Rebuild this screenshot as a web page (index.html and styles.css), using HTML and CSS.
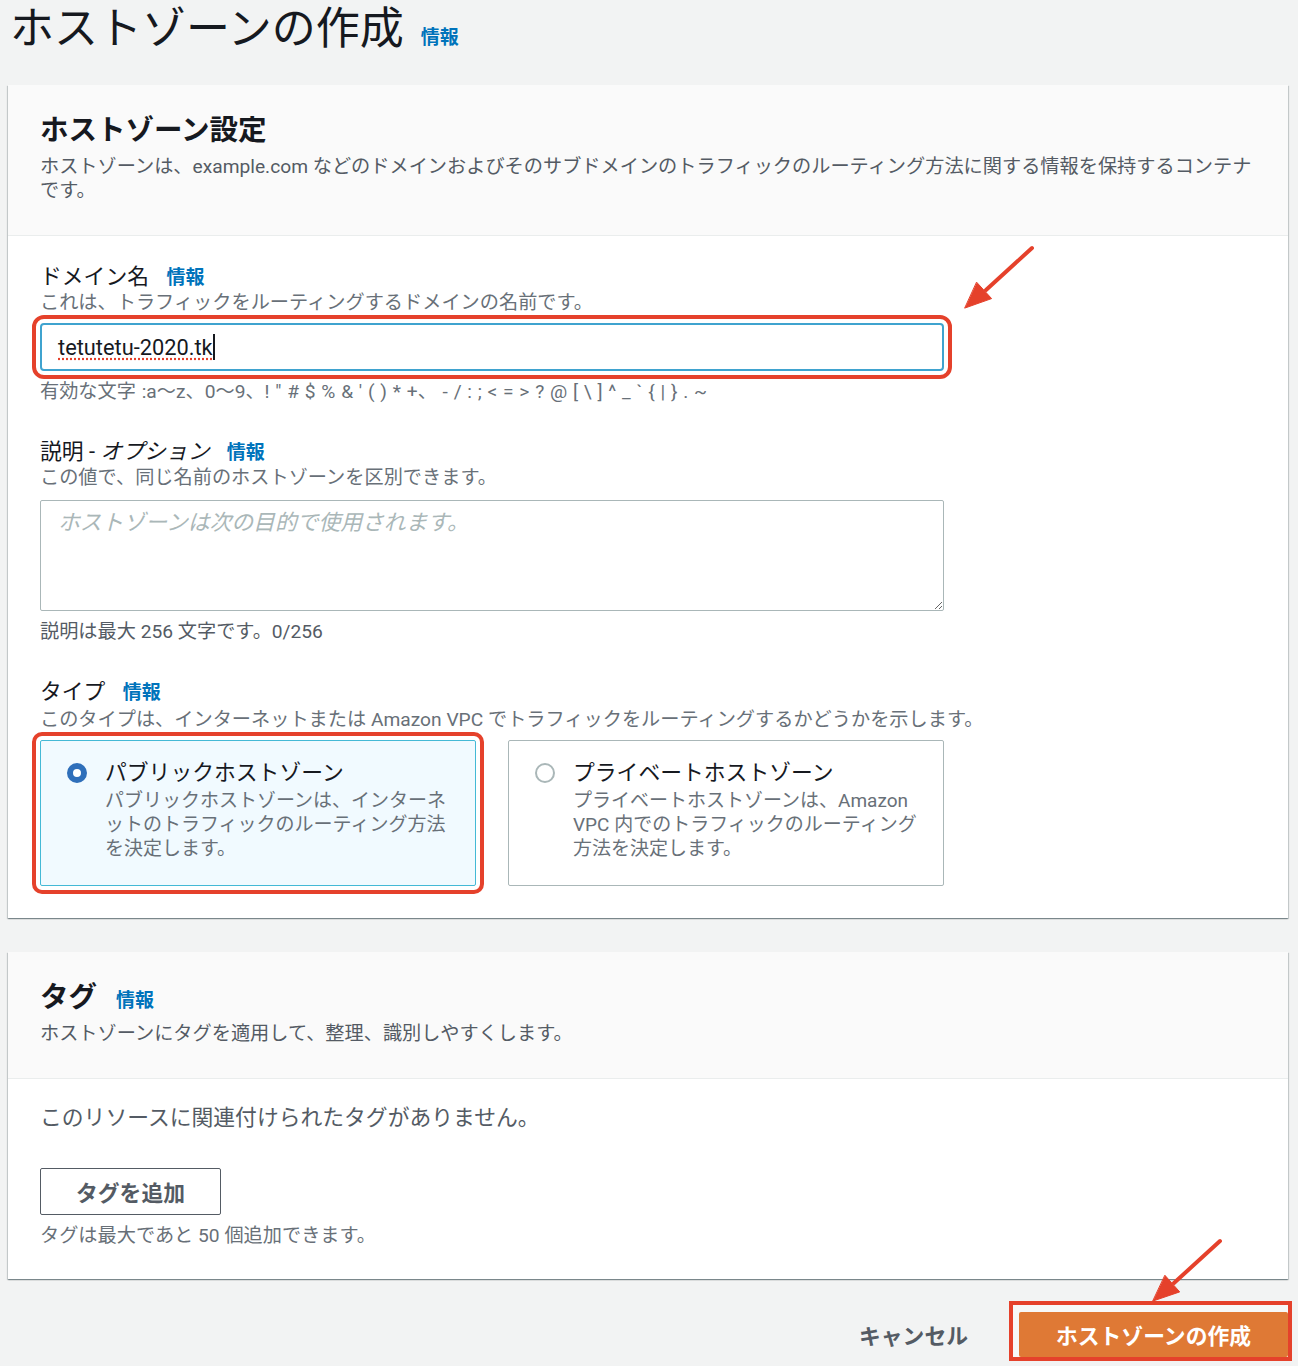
FILE: index.html
```html
<!DOCTYPE html>
<html lang="ja">

<head>
    <meta charset="UTF-8">
    <title>ホストゾーンの作成</title>
    <link rel="stylesheet" href="styles.css">
</head>

<body>
    <div class="page">
        <h1 class="page-title">ホストゾーンの作成 <a class="info">情報</a></h1>

        <!-- Hosted zone settings -->
        <section class="container">
            <div class="container-header">
                <h2>ホストゾーン設定</h2>
                <p>ホストゾーンは、example.com などのドメインおよびそのサブドメインのトラフィックのルーティング方法に関する情報を保持するコンテナです。</p>
            </div>
            <div class="container-body">
                <div class="field">
                    <div class="label">ドメイン名 <a class="info">情報</a></div>
                    <div class="desc">これは、トラフィックをルーティングするドメインの名前です。</div>
                    <div class="text-input marked"><span class="typo">tetutetu-2020.tk</span><span class="caret"></span></div>
                    <div class="hint chars">有効な文字 :a〜z、0〜9、! " # $ % &amp; ' ( ) * +、 - / : ; &lt; = &gt; ? @ [ \ ] ^ _ ` { | } . ~</div>
                </div>

                <div class="field">
                    <div class="label">説明 - <i>オプション</i> <a class="info">情報</a></div>
                    <div class="desc">この値で、同じ名前のホストゾーンを区別できます。</div>
                    <textarea class="text-area" placeholder="ホストゾーンは次の目的で使用されます。"></textarea>
                    <div class="hint">説明は最大 256 文字です。0/256</div>
                </div>

                <div class="field">
                    <div class="label">タイプ <a class="info">情報</a></div>
                    <div class="desc type-desc">このタイプは、インターネットまたは Amazon VPC でトラフィックをルーティングするかどうかを示します。</div>
                    <div class="tiles">
                        <div class="tile selected marked">
                            <span class="radio on"></span>
                            <div>
                                <div class="tile-title">パブリックホストゾーン</div>
                                <div class="tile-desc">パブリックホストゾーンは、インターネットのトラフィックのルーティング方法を決定します。</div>
                            </div>
                        </div>
                        <div class="tile">
                            <span class="radio"></span>
                            <div>
                                <div class="tile-title">プライベートホストゾーン</div>
                                <div class="tile-desc">プライベートホストゾーンは、Amazon VPC 内でのトラフィックのルーティング方法を決定します。</div>
                            </div>
                        </div>
                    </div>
                </div>
            </div>
        </section>

        <!-- Tags -->
        <section class="container">
            <div class="container-header">
                <h2>タグ <a class="info">情報</a></h2>
                <p>ホストゾーンにタグを適用して、整理、識別しやすくします。</p>
            </div>
            <div class="container-body tags-body">
                <div class="empty">このリソースに関連付けられたタグがありません。</div>
                <button class="btn-normal">タグを追加</button>
                <div class="hint">タグは最大であと 50 個追加できます。</div>
            </div>
        </section>

        <div class="actions">
            <button class="btn-link">キャンセル</button>
            <span class="mark-box"><button class="btn-primary">ホストゾーンの作成</button></span>
        </div>
    </div>

    <!-- annotation arrows -->
    <svg class="arrows" width="1298" height="1366" viewBox="0 0 1298 1366">
        <g stroke="#e5412b" stroke-width="4" stroke-linecap="round" fill="#e5412b">
            <line x1="1032" y1="248" x2="986" y2="290"/>
            <polygon points="965,308 991.6,298.6 976.8,282.4" stroke-width="1"/>
            <line x1="1220" y1="1241" x2="1174" y2="1283"/>
            <polygon points="1153,1301 1179.7,1291.9 1165.1,1275.5" stroke-width="1"/>
        </g>
    </svg>
</body>

</html>
```

FILE: styles.css
```css
body {
    margin: 0;
    background: #f2f3f3;
    font-family: Roboto, "Noto Sans CJK JP", sans-serif;
    color: #16191f;
}

.page {
    padding: 0 10px 0 8px;
}

.page-title {
    margin: 0 0 29px;
    padding-top: 2px;
    height: 54px;
    font-size: 44px;
    font-weight: 400;
    line-height: 54px;
    padding-left: 2px;
}

.info {
    color: #0073bb;
    font-size: 19px;
    font-weight: 700;
    line-height: 1;
    margin-left: 12px;
    cursor: pointer;
}

.page-title .info {
    margin-left: 6px;
}

/* Containers */
.container {
    background: #fff;
    box-shadow: 0 1px 1px 0 rgba(0, 28, 36, .3), 1px 1px 1px 0 rgba(0, 28, 36, .15), -1px 1px 1px 0 rgba(0, 28, 36, .15);
    margin-bottom: 34px;
}

.container-header {
    background: #fafafa;
    border-bottom: 1px solid #eaeded;
    padding: 28px 32px 32px;
}

.container-header h2 {
    margin: 0;
    font-size: 28.5px;
    line-height: 36px;
    font-weight: 700;
}

.container-header p {
    margin: 6px 0 0;
    font-size: 19.2px;
    line-height: 24px;
    color: #545b64;
}

.container-body {
    padding: 27px 32px 32px;
}

.tags-body {
    padding: 25px 32px 31px;
}

/* Fields */
.field + .field {
    margin-top: 34px;
}

.label {
    font-size: 21.8px;
    line-height: 28px;
}

.desc,
.hint {
    font-size: 19.2px;
    line-height: 24px;
    color: #687078;
}

.type-desc {
    margin-top: 2px;
}

.hint {
    margin-top: 9px;
}

.chars {
    word-spacing: 1px;
}

.field:nth-child(2) .hint {
    color: #545b64;
}

.text-input {
    margin-top: 8px;
    width: 904px;
    height: 48px;
    box-sizing: border-box;
    border: 2px solid #3fa3cf;
    border-radius: 4px;
    background: #fff;
    padding: 0 16px;
    display: flex;
    align-items: center;
    font-size: 21.8px;
}

.typo {
    text-decoration: underline dotted #e5412b;
    text-underline-offset: 4px;
}

.caret {
    display: inline-block;
    width: 2px;
    height: 26px;
    background: #16191f;
}

.marked {
    outline: 4px solid #e5412b;
    outline-offset: 4px;
}

.text-area {
    display: block;
    margin-top: 10px;
    width: 904px;
    height: 111px;
    box-sizing: border-box;
    border: 1px solid #aab7b8;
    border-radius: 2px;
    padding: 8px 17px;
    font-family: inherit;
    font-size: 21.8px;
    line-height: 28px;
    resize: vertical;
}

.text-area::placeholder {
    color: #aab7b8;
    font-style: italic;
}

/* Radio tiles */
.tiles {
    display: grid;
    grid-template-columns: 436px 436px;
    gap: 32px;
    margin-top: 8px;
}

.tile {
    display: flex;
    gap: 18px;
    border: 1px solid #aab7b8;
    border-radius: 2px;
    padding: 19px 20px 24px 26px;
}

.tile.selected {
    background: #f1faff;
    border-color: #44b9d6;
    outline-offset: 4px;
}

.radio {
    flex: none;
    width: 20px;
    height: 20px;
    box-sizing: border-box;
    border-radius: 50%;
    border: 2px solid #aab7b8;
    background: #fff;
    margin-top: 3px;
}

.radio.on {
    border: 6px solid #2f6fba;
}

.tile-title {
    font-size: 21.8px;
    line-height: 26px;
}

.tile-desc {
    margin-top: 3px;
    font-size: 19px;
    line-height: 24px;
    color: #687078;
}

/* Tags */
.empty {
    font-size: 21.8px;
    line-height: 28px;
    color: #545b64;
}

button {
    font-family: inherit;
    cursor: pointer;
}

.btn-normal {
    display: block;
    margin-top: 36px;
    width: 181px;
    height: 47px;
    border: 1px solid #545b64;
    border-radius: 2px;
    background: #fff;
    color: #545b64;
    font-size: 21.8px;
    font-weight: 700;
}

/* Footer actions */
.actions {
    display: flex;
    justify-content: flex-end;
    align-items: flex-end;
    gap: 24px;
    margin-top: -12px;
    margin-right: -4px;
}

.btn-link {
    background: none;
    border: none;
    height: 45px;
    margin-bottom: 4px;
    padding: 0 17px;
    color: #545b64;
    font-size: 21.8px;
    font-weight: 700;
}

.mark-box {
    display: block;
    border: 4px solid #e5412b;
    padding: 7px 0 0 6px;
    background: #f7f8f8;
}

.btn-primary {
    display: block;
    width: 269px;
    height: 45px;
    border: none;
    border-radius: 2px;
    background: #df7935;
    color: #fff;
    font-size: 21.8px;
    font-weight: 700;
}

.arrows {
    position: absolute;
    top: 0;
    left: 0;
    pointer-events: none;
}
```
